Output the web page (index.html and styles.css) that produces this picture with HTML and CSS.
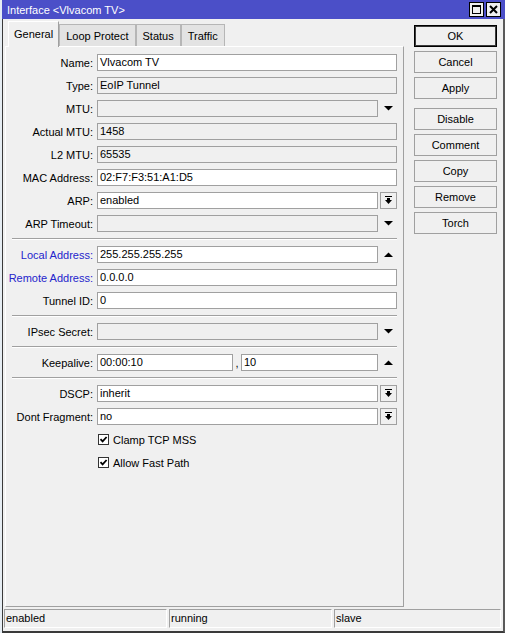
FILE: index.html
```html
<!DOCTYPE html>
<html>
<head>
<meta charset="utf-8">
<title>Interface &lt;Vlvacom TV&gt;</title>
<link rel="stylesheet" href="styles.css">
</head>
<body>
<div class="window">
  <div class="titlebar">
    <span class="title">Interface &lt;Vlvacom TV&gt;</span>
    <div class="tb-btns">
      <span class="tb-btn"><svg width="9" height="9" viewBox="0 0 9 9"><rect x="0.5" y="0.5" width="8" height="8" fill="none" stroke="#000"/><rect x="0" y="0" width="9" height="2" fill="#000"/></svg></span>
      <span class="tb-btn"><svg width="9" height="9" viewBox="0 0 9 9"><path d="M1 1L8 8M8 1L1 8" stroke="#000" stroke-width="2"/></svg></span>
    </div>
  </div>
  <div class="frame">
    <div class="content">
      <div class="main">
        <div class="tabs">
          <span class="tab active">General</span>
          <span class="tab">Loop Protect</span>
          <span class="tab">Status</span>
          <span class="tab">Traffic</span>
        </div>
        <div class="panel">
          <div class="row"><span class="label">Name:</span><span class="field">Vlvacom TV</span></div>
          <div class="row"><span class="label">Type:</span><span class="field ro">EoIP Tunnel</span></div>
          <div class="row"><span class="label">MTU:</span><span class="field ro"></span><span class="arr"><svg width="9" height="5" viewBox="0 0 9 5"><path d="M0 0h9L4.5 4.6z"/></svg></span></div>
          <div class="row"><span class="label">Actual MTU:</span><span class="field ro">1458</span></div>
          <div class="row"><span class="label">L2 MTU:</span><span class="field ro">65535</span></div>
          <div class="row"><span class="label">MAC Address:</span><span class="field">02:F7:F3:51:A1:D5</span></div>
          <div class="row"><span class="label">ARP:</span><span class="field">enabled</span><span class="arr dd"><svg width="7" height="9" viewBox="0 0 7 9"><rect width="7" height="1"/><rect x="2" y="2" width="3" height="2"/><path d="M0 4h7L3.5 8z"/></svg></span></div>
          <div class="row"><span class="label">ARP Timeout:</span><span class="field ro"></span><span class="arr"><svg width="9" height="5" viewBox="0 0 9 5"><path d="M0 0h9L4.5 4.6z"/></svg></span></div>
          <div class="sep"></div>
          <div class="row"><span class="label blue">Local Address:</span><span class="field">255.255.255.255</span><span class="arr"><svg width="9" height="5" viewBox="0 0 9 5"><path d="M0 5h9L4.5 0.4z"/></svg></span></div>
          <div class="row"><span class="label blue">Remote Address:</span><span class="field">0.0.0.0</span></div>
          <div class="row"><span class="label">Tunnel ID:</span><span class="field">0</span></div>
          <div class="sep"></div>
          <div class="row"><span class="label">IPsec Secret:</span><span class="field ro"></span><span class="arr"><svg width="9" height="5" viewBox="0 0 9 5"><path d="M0 0h9L4.5 4.6z"/></svg></span></div>
          <div class="sep"></div>
          <div class="row"><span class="label">Keepalive:</span><span class="field k1">00:00:10</span><span class="comma">,</span><span class="field">10</span><span class="arr"><svg width="9" height="5" viewBox="0 0 9 5"><path d="M0 5h9L4.5 0.4z"/></svg></span></div>
          <div class="sep"></div>
          <div class="row"><span class="label">DSCP:</span><span class="field">inherit</span><span class="arr dd"><svg width="7" height="9" viewBox="0 0 7 9"><rect width="7" height="1"/><rect x="2" y="2" width="3" height="2"/><path d="M0 4h7L3.5 8z"/></svg></span></div>
          <div class="row"><span class="label">Dont Fragment:</span><span class="field">no</span><span class="arr dd"><svg width="7" height="9" viewBox="0 0 7 9"><rect width="7" height="1"/><rect x="2" y="2" width="3" height="2"/><path d="M0 4h7L3.5 8z"/></svg></span></div>
          <div class="row check"><span class="chk"><svg width="9" height="9" viewBox="0 0 9 9"><path d="M1.5 4.2L3.6 6.4L7.6 2" fill="none" stroke="#000" stroke-width="1.8"/></svg></span><span>Clamp TCP MSS</span></div>
          <div class="row check"><span class="chk"><svg width="9" height="9" viewBox="0 0 9 9"><path d="M1.5 4.2L3.6 6.4L7.6 2" fill="none" stroke="#000" stroke-width="1.8"/></svg></span><span>Allow Fast Path</span></div>
        </div>
      </div>
      <div class="side">
        <span class="btn default">OK</span>
        <span class="btn">Cancel</span>
        <span class="btn">Apply</span>
        <span class="btn group">Disable</span>
        <span class="btn">Comment</span>
        <span class="btn">Copy</span>
        <span class="btn">Remove</span>
        <span class="btn">Torch</span>
      </div>
    </div>
    <div class="status">
      <span class="cell">enabled</span>
      <span class="cell">running</span>
      <span class="cell">slave</span>
    </div>
  </div>
</div>
</body>
</html>
```

FILE: styles.css
```css
html, body {
  margin: 0;
  padding: 0;
}
body {
  background: #e6edf3;
  font-family: "Liberation Sans", Arial, sans-serif;
  font-size: 11px;
  color: #000;
}
.window {
  margin-left: 2px;
  width: 503px;
  height: 633px;
  display: flex;
  flex-direction: column;
  background: #f0f0f0;
}
.titlebar {
  height: 19px;
  flex: none;
  box-sizing: border-box;
  background: #4b4fc8;
  color: #fff;
  display: flex;
  align-items: center;
  padding: 0 4px 0 5px;
}
.title {
  flex: 1;
  white-space: nowrap;
}
.tb-btns {
  display: flex;
  gap: 2px;
}
.tb-btn {
  width: 15px;
  height: 15px;
  box-sizing: border-box;
  border: 1px solid #000;
  background: #f0f0f0;
  display: flex;
  align-items: center;
  justify-content: center;
}
.frame {
  flex: 1;
  min-height: 0;
  display: flex;
  flex-direction: column;
  border-left: 1px solid #3a3a3a;
  border-right: 2px solid #5a5a5a;
  border-bottom: 2px solid #3a3a3a;
}
.content {
  flex: 1;
  min-height: 0;
  display: flex;
  padding: 2px 0 0 2px;
}
.main {
  width: 399px;
  flex: none;
  display: flex;
  flex-direction: column;
}
.tabs {
  height: 25px;
  flex: none;
  display: flex;
  align-items: flex-end;
  padding-left: 3px;
  position: relative;
  z-index: 1;
}
.tab {
  height: 22px;
  box-sizing: border-box;
  padding: 0 6px;
  border: 1px solid #b6b6b6;
  border-bottom: none;
  background: #e3e3e3;
  display: flex;
  align-items: center;
  white-space: nowrap;
}
.tab.active {
  height: 26px;
  margin-bottom: -1px;
  padding: 0 5px 1px;
  background: #f0f0f0;
  border-color: #fff #a0a0a0 transparent #fff;
}
.panel {
  flex: 1;
  min-height: 0;
  box-sizing: border-box;
  border: 1px solid;
  border-color: #fff #a0a0a0 #a0a0a0 #fff;
  padding: 7px 6px 0 6px;
  display: flex;
  flex-direction: column;
  gap: 6px;
}
.row {
  height: 17px;
  flex: none;
  display: flex;
  align-items: center;
}
.label {
  width: 81px;
  flex: none;
  margin-right: 4px;
  display: flex;
  justify-content: flex-end;
  white-space: nowrap;
}
.label.blue {
  color: #2424cc;
}
.field {
  flex: 1;
  min-width: 0;
  height: 17px;
  box-sizing: border-box;
  border: 1px solid #a0a0a0;
  background: #fff;
  padding: 0 2px;
  line-height: 15px;
  white-space: nowrap;
  overflow: hidden;
}
.field.ro {
  background: #f0f0f0;
}
.field.k1 {
  flex: none;
  width: 136px;
}
.comma {
  width: 8px;
  flex: none;
  text-align: center;
  line-height: 15px;
  padding-top: 2px;
}
.arr {
  width: 17px;
  height: 17px;
  flex: none;
  margin-left: 2px;
  box-sizing: border-box;
  display: flex;
  align-items: center;
  justify-content: center;
}
.arr.dd {
  border: 1px solid #a0a0a0;
  background: #f0f0f0;
}
.sep {
  flex: none;
  height: 0;
  border-top: 1px solid #a0a0a0;
  border-bottom: 1px solid #fff;
}
.row.check {
  padding-left: 86px;
  gap: 4px;
}
.chk {
  width: 11px;
  height: 11px;
  box-sizing: border-box;
  border: 1px solid #333;
  background: #fff;
  display: flex;
  align-items: center;
  justify-content: center;
}
.side {
  width: 83px;
  flex: none;
  margin-left: 10px;
  padding-top: 4px;
  display: flex;
  flex-direction: column;
  gap: 4px;
}
.btn {
  height: 22px;
  box-sizing: border-box;
  border: 1px solid #a0a0a0;
  background: #f0f0f0;
  display: flex;
  align-items: center;
  justify-content: center;
}
.btn.default {
  border-color: #000;
  box-shadow: inset 0 0 0 1px #3c3c3c;
}
.btn.group {
  margin-top: 5px;
}
.status {
  height: 19px;
  flex: none;
  margin: 2px 0 3px;
  padding: 0 2px 0 1px;
  display: grid;
  grid-template-columns: 163px 163px 1fr;
  gap: 2px;
}
.cell {
  box-sizing: border-box;
  border: 1px solid;
  border-color: #a0a0a0 #fff #fff #a0a0a0;
  padding-left: 1px;
  line-height: 17px;
  white-space: nowrap;
}
```
